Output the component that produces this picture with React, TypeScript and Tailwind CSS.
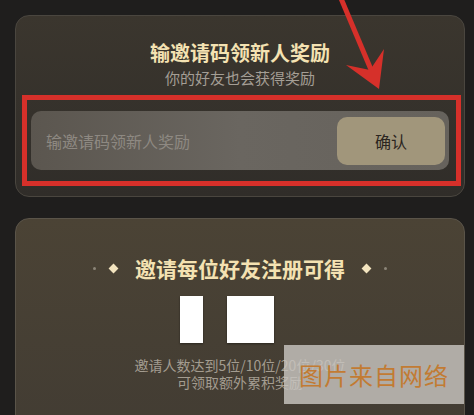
import React from "react";

const font = { fontFamily: '"Noto Sans CJK SC", "Noto Sans", sans-serif' };

export default function App() {
  return (
    <div
      className="relative w-[474px] h-[415px] overflow-hidden bg-[#1f1e1d] pt-[15px]"
      style={font}
    >
      {/* Card 1 */}
      <div className="relative ml-[15px] w-[450px] h-[182px] rounded-[14px] border border-[#4a463f] bg-gradient-to-b from-[#3b362e] to-[#302d29] flex flex-col items-center">
        <div className="mt-[23px] text-[20px] leading-[28px] font-bold text-[#f4e2b2]">
          输邀请码领新人奖励
        </div>
        <div className="mt-[1px] text-[15px] leading-[20px] text-[#a49e95]">
          你的好友也会获得奖励
        </div>
        <div className="mt-[23px] w-[418px] h-[59px] rounded-[10px] bg-gradient-to-r from-[#5b564f] via-[#6a6660] to-[#66625c] flex items-center justify-between pl-[15px] pr-[4px]">
          <span className="text-[16px] text-[#8e8982]">输邀请码领新人奖励</span>
          <div className="w-[108px] h-[48px] rounded-[10px] bg-[#a1967b] flex items-center justify-center text-[16px] text-[#2b2520]">
            确认
          </div>
        </div>
        {/* red annotation box */}
        <div className="absolute left-[6px] top-[79px] w-[439px] h-[91px] border-[5px] border-[#d6302a]" />
      </div>

      {/* Card 2 */}
      <div className="mt-[21px] ml-[15px] w-[450px] h-[220px] rounded-[14px] border border-[#5a5449] bg-gradient-to-b from-[#4b4335] to-[#423c33] flex flex-col">
        <div className="mt-[35px] flex items-center justify-center">
          <span className="w-[3px] h-[3px] rounded-full bg-[#8c8578]" />
          <span className="ml-[14px] w-[7px] h-[7px] rotate-45 bg-[#f3e4bf]" />
          <span className="ml-[18px] mr-[18px] text-[21px] leading-[28px] font-bold text-[#f4e2b2]">
            邀请每位好友注册可得
          </span>
          <span className="w-[7px] h-[7px] rotate-45 bg-[#f3e4bf]" />
          <span className="ml-[14px] w-[3px] h-[3px] rounded-full bg-[#8c8578]" />
        </div>
        <div className="mt-[14px] ml-[164px] flex gap-[24px]">
          <div className="w-[23px] h-[47px] bg-white shadow-[0_1px_2px_rgba(0,0,0,0.4)]" />
          <div className="w-[47px] h-[47px] bg-white shadow-[0_1px_2px_rgba(0,0,0,0.4)]" />
        </div>
        <div className="mt-[14px] text-center text-[14px] leading-[17px] text-[#a39c90]">
          <div>邀请人数达到5位/10位/20位/30位</div>
          <div>可领取额外累积奖励</div>
        </div>
      </div>

      {/* watermark */}
      <div className="absolute left-[284px] top-[345px] w-[180px] h-[59px] bg-[rgba(200,197,192,0.82)] flex items-center justify-center">
        <span className="text-[24px] leading-[30px] tracking-[1px] text-[#c27b33]">图片来自网络</span>
      </div>

      {/* red arrow */}
      <svg className="absolute left-0 top-0" width="474" height="415" viewBox="0 0 474 415">
        <line x1="340" y1="-4" x2="372" y2="72" stroke="#d6302a" strokeWidth="5" />
        <polygon points="379,89 346,65 370,70 384,49" fill="#d6302a" />
      </svg>
    </div>
  );
}
